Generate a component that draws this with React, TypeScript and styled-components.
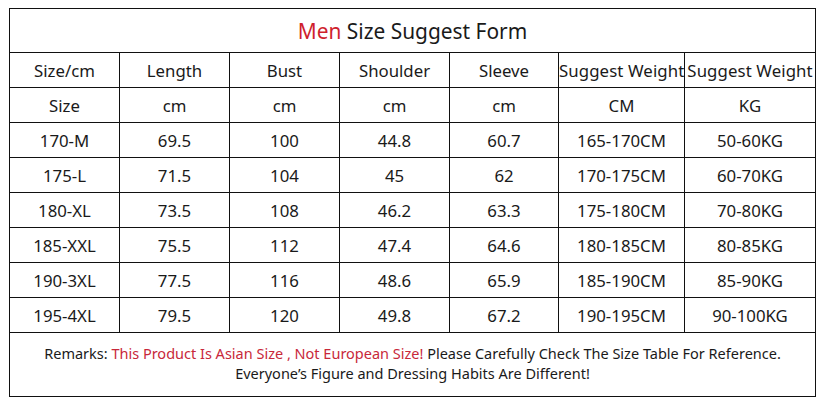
import React from 'react';
import styled, { createGlobalStyle } from 'styled-components';

const GlobalStyle = createGlobalStyle`
  html, body {
    margin: 0;
    padding: 0;
    background: #ffffff;
  }
  body {
    font-family: "Noto Sans", "Open Sans", Arial, sans-serif;
    color: #1a1a1a;
  }
`;

const COLUMNS = [110, 110, 110, 110, 109, 126, 131];

const HEADERS = ['Size/cm', 'Length', 'Bust', 'Shoulder', 'Sleeve', 'Suggest Weight', 'Suggest Weight'];
const UNITS = ['Size', 'cm', 'cm', 'cm', 'cm', 'CM', 'KG'];

const ROWS = [
  ['170-M', '69.5', '100', '44.8', '60.7', '165-170CM', '50-60KG'],
  ['175-L', '71.5', '104', '45', '62', '170-175CM', '60-70KG'],
  ['180-XL', '73.5', '108', '46.2', '63.3', '175-180CM', '70-80KG'],
  ['185-XXL', '75.5', '112', '47.4', '64.6', '180-185CM', '80-85KG'],
  ['190-3XL', '77.5', '116', '48.6', '65.9', '185-190CM', '85-90KG'],
  ['195-4XL', '79.5', '120', '49.8', '67.2', '190-195CM', '90-100KG'],
];

const App = () => {
  return (
    <Page>
      <GlobalStyle />
      <SizeTable>
        <colgroup>
          {COLUMNS.map((w, i) => (
            <col key={i} style={{ width: w }} />
          ))}
        </colgroup>
        <tbody>
          <tr>
            <TitleCell colSpan={7}>
              <Red>Men</Red> Size Suggest Form
            </TitleCell>
          </tr>
          <tr>
            {HEADERS.map((h, i) => (
              <Cell key={i} $tight={h.length > 10}>
                {h}
              </Cell>
            ))}
          </tr>
          <tr>
            {UNITS.map((u, i) => (
              <Cell key={i}>{u}</Cell>
            ))}
          </tr>
          {ROWS.map((row, r) => (
            <tr key={r}>
              {row.map((value, c) => (
                <Cell key={c}>{value}</Cell>
              ))}
            </tr>
          ))}
          <tr>
            <RemarkCell colSpan={7}>
              Remarks: <RemarkRed>This Product Is Asian Size , Not European Size!</RemarkRed> Please
              Carefully Check The Size Table For Reference.
              <br />
              Everyone&rsquo;s Figure and Dressing Habits Are Different!
            </RemarkCell>
          </tr>
        </tbody>
      </SizeTable>
    </Page>
  );
};

const Page = styled.div`
  width: 825px;
  height: 404px;
  padding: 8px 0 0 9px;
  box-sizing: border-box;
`;

const SizeTable = styled.table`
  border-collapse: collapse;
  table-layout: fixed;
  width: 807px;
  border: 1.5px solid #111;
`;

const TitleCell = styled.td`
  height: 43px;
  padding: 0;
  text-align: center;
  font-size: 20.9px;
  border: 1.5px solid #111;
`;

const Red = styled.span`
  color: #cf1f2e;
`;

const Cell = styled.td<{ $tight?: boolean }>`
  height: 34px;
  padding: 0;
  text-align: center;
  font-size: 16.8px;
  letter-spacing: ${p => (p.$tight ? '0.1px' : '0')};
  white-space: nowrap;
  overflow: hidden;
  border: 1.5px solid #111;
`;

const RemarkCell = styled.td`
  height: 60px;
  padding: 0 0 3px;
  text-align: center;
  font-size: 14.5px;
  line-height: 20px;
  border: 1.5px solid #111;
`;

const RemarkRed = styled.span`
  color: #c8283a;
`;

export default App;
